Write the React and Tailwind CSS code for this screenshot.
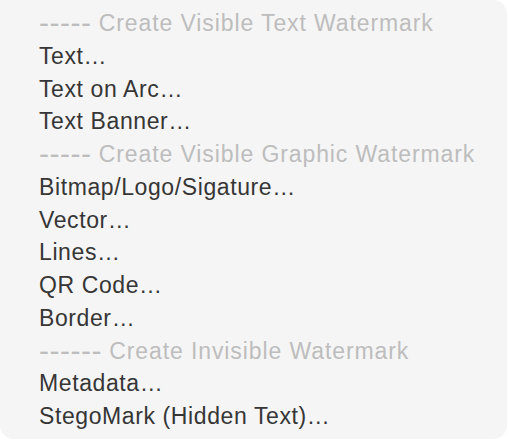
import React from "react";

const rows = [
  { d: "-----", t: "Create Visible Text Watermark", h: true },
  { t: "Text" },
  { t: "Text on Arc" },
  { t: "Text Banner" },
  { d: "-----", t: "Create Visible Graphic Watermark", h: true },
  { t: "Bitmap/Logo/Sigature" },
  { t: "Vector" },
  { t: "Lines" },
  { t: "QR Code" },
  { t: "Border" },
  { d: "------", t: "Create Invisible Watermark", h: true },
  { t: "Metadata" },
  { t: "StegoMark (Hidden Text)" },
];

export default function App() {
  return (
    <div className="w-[509px] h-[441px] bg-white">
      <div
        className="w-[507px] h-[439px] bg-[#f5f5f5] rounded-[14px] rounded-tl-none pt-[7px] pl-[39px] flex flex-col"
        style={{ fontFamily: '"Liberation Sans", Arial, sans-serif' }}
      >
        {rows.map((r, i) =>
          r.h ? (
            <div
              key={i}
              className="h-[32.75px] leading-[32.75px] text-[23px] tracking-[0.9px] whitespace-nowrap text-[#bdbdbd]"
            >
              <span className="inline-block text-[30px] leading-[20px] tracking-[0.5px] translate-y-[2px]">
                {r.d}
              </span>{" "}
              {r.t}
            </div>
          ) : (
            <div
              key={i}
              className="h-[32.75px] leading-[32.75px] text-[23px] tracking-[0.6px] whitespace-nowrap text-[#363636]"
            >
              {r.t}
              <span className="tracking-[-2px]">…</span>
            </div>
          )
        )}
      </div>
    </div>
  );
}
